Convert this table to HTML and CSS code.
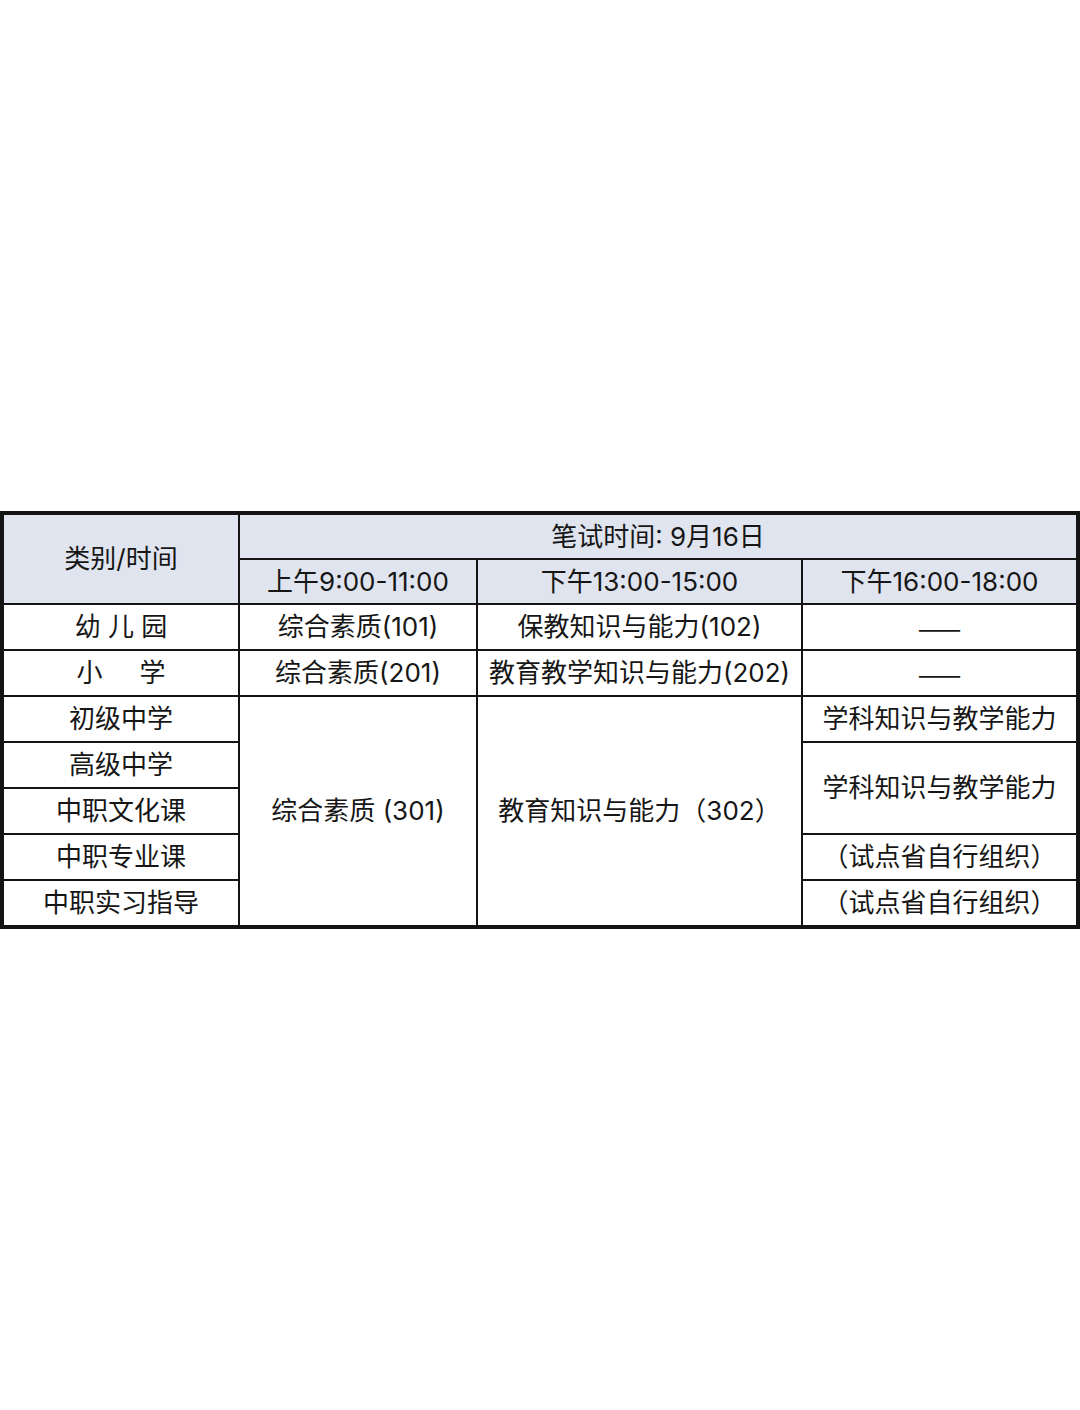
FILE: index.html
```html
<!DOCTYPE html>
<html lang="zh-CN">
<head>
<meta charset="utf-8">
<title>笔试时间</title>
<link rel="stylesheet" href="styles.css">
</head>
<body>
<div class="page">
  <div class="grid">
    <div class="cell head span-h">类别/时间</div>
    <div class="cell head top">笔试时间: 9月16日</div>
    <div class="cell head">上午9:00-11:00</div>
    <div class="cell head">下午13:00-15:00</div>
    <div class="cell head">下午16:00-18:00</div>

    <div class="cell">幼 儿 园</div>
    <div class="cell">综合素质(101)</div>
    <div class="cell">保教知识与能力(102)</div>
    <div class="cell dash">——</div>

    <div class="cell">小<span class="gap"></span>学</div>
    <div class="cell">综合素质(201)</div>
    <div class="cell">教育教学知识与能力(202)</div>
    <div class="cell dash">——</div>

    <div class="cell">初级中学</div>
    <div class="cell c2">综合素质 (301)</div>
    <div class="cell c3">教育知识与能力（302）</div>
    <div class="cell">学科知识与教学能力</div>

    <div class="cell">高级中学</div>
    <div class="cell span2">学科知识与教学能力</div>

    <div class="cell">中职文化课</div>

    <div class="cell">中职专业课</div>
    <div class="cell">（试点省自行组织）</div>

    <div class="cell">中职实习指导</div>
    <div class="cell">（试点省自行组织）</div>
  </div>
</div>
</body>
</html>
```

FILE: styles.css
```css
html, body {
  margin: 0;
  padding: 0;
  background: #ffffff;
}

.page {
  width: 1080px;
  height: 1410px;
  padding-top: 511px;
  box-sizing: border-box;
  font-family: "Inter", "Noto Sans CJK SC", sans-serif;
}

.grid {
  display: grid;
  grid-template-columns: 234px 236px 323px 273px;
  grid-template-rows: 43px 43px repeat(7, 44px);
  gap: 2px;
  padding: 4px;
  background: #141414;
  width: 1080px;
  box-sizing: border-box;
}

.cell {
  background: #ffffff;
  color: #161616;
  font-size: 26px;
  display: flex;
  align-items: center;
  justify-content: center;
  white-space: nowrap;
  line-height: 1;
}

.head {
  background: #dfe4ee;
}

.span-h {
  grid-row: 1 / 3;
  grid-column: 1;
}

.top {
  grid-column: 2 / 5;
  grid-row: 1;
}

.c2 {
  grid-column: 2;
  grid-row: 5 / 10;
}

.c3 {
  grid-column: 3;
  grid-row: 5 / 10;
}

.span2 {
  grid-row: span 2;
}

.dash {
  font-family: "Noto Sans CJK SC", sans-serif;
}

.gap {
  display: inline-block;
  width: 37px;
}
```
